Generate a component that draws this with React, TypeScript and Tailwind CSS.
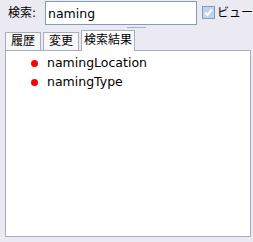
import React, { useState } from "react"

const jp = { fontFamily: '"DejaVu Sans", "Noto Sans CJK JP", sans-serif' }

const results = ["namingLocation", "namingType"]

export default function App() {
    const [query, setQuery] = useState("naming")
    const [tab, setTab] = useState(2)
    const tabs = ["履歴", "変更", "検索結果"]

    return (
        <div className="w-[253px] h-[242px] bg-[#ebe9f2] flex flex-col text-[12px] text-black" style={jp}>
            {/* search row */}
            <div className="flex items-start h-[25px] pt-[1px]">
                <span className="ml-[8px] w-[38px] leading-[24px] text-[12px]">検索:</span>
                <input
                    value={query}
                    onChange={(e) => setQuery(e.target.value)}
                    className="w-[152px] h-[24px] border border-[#7f9db9] bg-white px-[2px] text-[12.5px] outline-none"
                />
                <div className="ml-[5px] mt-[5px] w-[13px] h-[13px] border border-[#8a9cb8] bg-[#bcd4ee] flex items-center justify-center">
                    <svg width="11" height="11" viewBox="0 0 11 11">
                        <path d="M2 5.5 L4.5 8 L9 2.5" stroke="#ffffff" strokeWidth="2" fill="none" />
                    </svg>
                </div>
                <span className="ml-[2px] leading-[24px] whitespace-nowrap">ビュー</span>
            </div>

            {/* splitter grip */}
            <div className="flex h-[5px] items-center pl-[127px]">
                <div className="w-[19px] h-[1px] bg-[#a9b1bc]" />
            </div>

            {/* tabs */}
            <div className="flex items-end pl-[5px] gap-[2px] h-[20px] relative z-10">
                {tabs.map((t, i) =>
                    i === tab ? (
                        <div
                            key={t}
                            onClick={() => setTab(i)}
                            className="h-[21px] w-[54px] text-center border border-b-0 border-[#a7afba] bg-white leading-[19px] -mb-[1px]"
                        >
                            {t}
                        </div>
                    ) : (
                        <div
                            key={t}
                            onClick={() => setTab(i)}
                            className="h-[18px] w-[36px] border border-b-0 border-[#a7afba] bg-[#f7f7f9] leading-[17px] text-center"
                        >
                            {t}
                        </div>
                    )
                )}
            </div>

            {/* result panel */}
            <div className="ml-[5px] w-[246px] h-[187px] border border-[#a7afba] bg-white pt-[3px]">
                {results.map((r) => (
                    <div key={r} className="flex items-center h-[19px] text-[12.5px]">
                        <span className="ml-[25px] w-[7px] h-[7px] rounded-full bg-[#ff0000]" />
                        <span className="ml-[9px]">{r}</span>
                    </div>
                ))}
            </div>
        </div>
    )
}
